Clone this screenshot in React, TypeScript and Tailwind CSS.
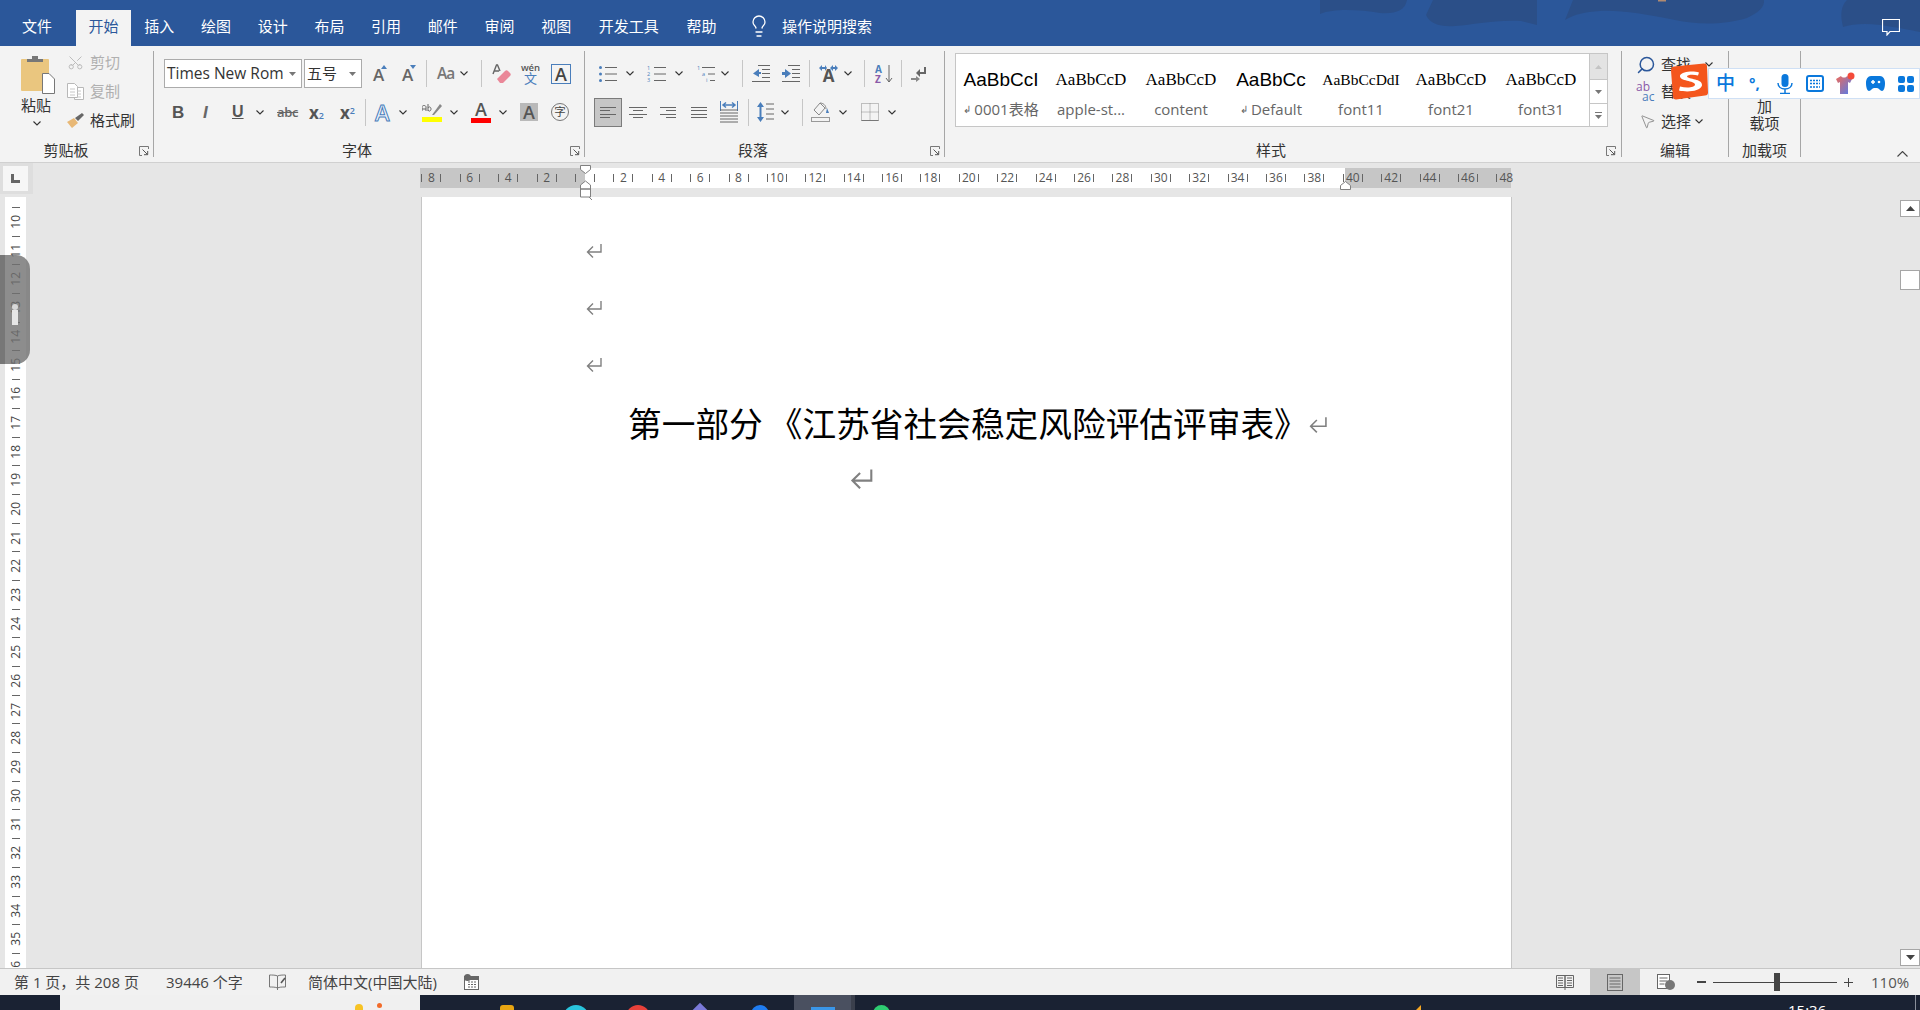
import { Lightbulb, Scissors, Search, MousePointer2 } from 'lucide-react'

const tabs = [
  { label: '插入', w: 'w-[56.7px]' },
  { label: '绘图', w: 'w-[56.7px]' },
  { label: '设计', w: 'w-[56.7px]' },
  { label: '布局', w: 'w-[56.7px]' },
  { label: '引用', w: 'w-[56.7px]' },
  { label: '邮件', w: 'w-[56.7px]' },
  { label: '审阅', w: 'w-[56.7px]' },
  { label: '视图', w: 'w-[56.7px]' },
  { label: '开发工具', w: 'w-[88.7px]' },
  { label: '帮助', w: 'w-[56.7px]' },
]

const styles = [
  { sample: 'AaBbCcI', name: '0001表格', cls: "font-['Liberation_Sans',sans-serif] text-[19px]", mark: true },
  { sample: 'AaBbCcD', name: 'apple-st...', cls: "font-['Liberation_Serif',serif] text-[17px]", mark: false },
  { sample: 'AaBbCcD', name: 'content', cls: "font-['Liberation_Serif',serif] text-[17px]", mark: false },
  { sample: 'AaBbCc', name: 'Default', cls: "font-['Liberation_Sans',sans-serif] text-[19px]", mark: true },
  { sample: 'AaBbCcDdI', name: 'font11', cls: "font-['Liberation_Serif',serif] text-[15.5px]", mark: false },
  { sample: 'AaBbCcD', name: 'font21', cls: "font-['Liberation_Serif',serif] text-[17px]", mark: false },
  { sample: 'AaBbCcD', name: 'font31', cls: "font-['Liberation_Serif',serif] text-[17px]", mark: false },
]

const rulerMarks = [8, 6, 4, 2, 0, 2, 4, 6, 8, 10, 12, 14, 16, 18, 20, 22, 24, 26, 28, 30, 32, 34, 36, 38, 40, 42, 44, 46, 48]
const vMarks = Array.from({ length: 27 }, (_, i) => i + 10)

function Chevron({ className = '' }: { className?: string }) {
  return (
    <svg width="8" height="5" viewBox="0 0 8 5" className={'shrink-0 ' + className}>
      <path d="M0.5 0.5 4 4 7.5 0.5" fill="none" stroke="#333" strokeWidth="1.1" />
    </svg>
  )
}

function Launcher({ className = '' }: { className?: string }) {
  return (
    <svg width="10" height="10" viewBox="0 0 10 10" className={'shrink-0 ' + className}>
      <path d="M9.5 3V.5H.5v9H3" fill="none" stroke="#777" />
      <path d="M3.5 3.5 8.5 8.5M5 8.7h3.7V5" fill="none" stroke="#555" />
    </svg>
  )
}

function Sep({ className = '' }: { className?: string }) {
  return <div className={'w-px h-[27px] bg-[#c6c6c6] shrink-0 ' + className} />
}

function Return({ w = 16, h = 15, className = '', stroke = 1.4 }: { w?: number; h?: number; className?: string; stroke?: number }) {
  return (
    <svg width={w} height={h} viewBox="0 0 16 15" className={className}>
      <path d="M15 1v8H2M7 3.5 1.5 9 7 14.5" fill="none" stroke="#808080" strokeWidth={stroke} />
    </svg>
  )
}

function Lines({ w, ys, x1, x2, className = '', h = 18 }: { w: number; ys: number[]; x1: (i: number) => number; x2: (i: number) => number; className?: string; h?: number }) {
  return (
    <svg width={w} height={h} viewBox={`0 0 ${w} ${h}`} className={'shrink-0 ' + className}>
      {ys.map((y, i) => (
        <path key={i} d={`M${x1(i)} ${y}.5H${x2(i)}`} stroke="#666" strokeWidth="1" />
      ))}
    </svg>
  )
}

function TitleBar() {
  return (
    <div className="relative h-[46px] shrink-0 bg-[#2b579a] flex items-end text-[15px] text-white overflow-hidden">
      {/* theme clouds */}
      <svg width="620" height="46" viewBox="0 0 620 46" className="absolute right-0 top-0">
        <g fill="#2b4f88">
          <path d="M20 0v14C35 8 60 10 80 13c15 1 25-2 27-13z" />
          <path d="M133 0l-7 15c4 9 14 12 29 11 20-1 35-6 66-5l16 4V0z" />
          <path d="M273 0l-8 20c10-6 20-8 35-9 20-1 45 3 75 9 20 4 45 6 72-2 11-5 18-11 17-18z" />
          <path d="M547 0c-6 6-7 14-4 27 9-3 22-4 37-2 15 2 30 5 40 7V0z" />
        </g>
        <rect x="358" y="0" width="8" height="1.500" fill="#b08a70" />
      </svg>
      <div className="relative flex items-end h-[36px] pl-[4px]">
        <div className="w-[66px] h-full flex items-center justify-center pb-[4px]">文件</div>
        <div className="ml-[6px] w-[55px] h-full flex items-center justify-center pb-[4px] bg-[#f3f3f3] text-[#2b579a]">开始</div>
        {tabs.map((t) => (
          <div key={t.label} className={t.w + ' h-full flex items-center justify-center pb-[4px]'}>{t.label}</div>
        ))}
        <Lightbulb size={24} strokeWidth={1.3} className="ml-[17px] mb-[4px] self-center shrink-0" />
        <span className="ml-[11px] mb-[4px] self-center">操作说明搜索</span>
      </div>
      <svg width="18" height="17" viewBox="0 0 18 17" className="absolute left-[1882px] top-[19px]">
        <path d="M.5.500h17v12H8l-3 3.500v-3.500H.5z" fill="none" stroke="#fff" strokeWidth="1.200" />
      </svg>
    </div>
  )
}

function Group({ label, className, labelCls = '', children, launcher }: { label: string; className: string; labelCls?: string; children: React.ReactNode; launcher?: string }) {
  return (
    <div className={'relative shrink-0 flex flex-col h-[106px] mt-[5px] border-r border-[#a6a6a6] ' + className}>
      <div className="flex-1 min-h-0">{children}</div>
      <div className={'h-[16px] pt-[2px] flex items-center justify-center text-[15px] leading-none text-[#333] ' + labelCls}>{label}</div>
      {launcher && <Launcher className={'absolute bottom-[1px] ' + launcher} />}
    </div>
  )
}

function Clipboard() {
  return (
    <Group label="剪贴板" className="w-[154px]" labelCls="pr-[21px]" launcher="right-[4px]">
      <div className="flex">
        <div className="w-[67px] pl-[20px] pt-[4px] flex flex-col">
          <svg width="35" height="39" viewBox="0 0 35 39">
            <rect x="1" y="4" width="28" height="32" rx="1" fill="#eac67f" />
            <path d="M7 7V4h5V1h6v3h5v3z" fill="#777" />
            <path d="M22.500 18.500h6.500l5.500 5.500v14.500h-12z" fill="#fff" stroke="#777" />
          </svg>
          <div className="ml-[1px] mt-[3px] text-[15px] leading-[16px] text-[#333]">粘贴</div>
          <Chevron className="ml-[13px] mt-[8px]" />
        </div>
        <div className="pt-[3px] text-[15px] leading-[17px]">
          <div className="flex items-center h-[17px] text-[#b0b0b0]">
            <Scissors size={17} strokeWidth={1.3} className="w-[17px] -rotate-90 text-[#b8b8b8]" />
            <span className="ml-[6px]">剪切</span>
          </div>
          <div className="flex items-center h-[17px] mt-[12px] text-[#b0b0b0]">
            <svg width="17" height="17" viewBox="0 0 17 17">
              <path d="M.5.500h7l3 3v11h-10zM10.500 4.500h6v12h-9v-2" fill="#fff" stroke="#b8b8b8" />
              <path d="M3 6h5M3 9h5M3 12h5M10 8h4M10 11h4M10 14h4" stroke="#c8c8c8" />
            </svg>
            <span className="ml-[6px]">复制</span>
          </div>
          <div className="flex items-center h-[17px] mt-[12px] text-[#333]">
            <svg width="18" height="15" viewBox="0 0 18 15">
              <path d="M0 9 7 5l4 5-6 5c-2-2-3-4-5-6z" fill="#e8b876" />
              <path d="M8 5l3 3 6-6-2-2z" fill="#666" />
            </svg>
            <span className="ml-[5px]">格式刷</span>
          </div>
        </div>
      </div>
    </Group>
  )
}

function Font() {
  return (
    <Group label="字体" className="w-[431px]" labelCls="pr-[24px]" launcher="right-[4px]">
      <div className="flex items-center h-[29px] mt-[8px]">
        <div className="ml-[10px] w-[138px] h-[29px] bg-white border border-[#ababab] flex items-center pl-[2px] text-[15.5px] text-[#333] shrink-0">
          <span className="whitespace-nowrap">Times New Rom</span>
          <svg width="7" height="4" viewBox="0 0 7 4" className="ml-[5px] shrink-0"><path d="M0 0h7L3.500 4z" fill="#777" /></svg>
        </div>
        <div className="ml-[2px] w-[58px] h-[29px] bg-white border border-[#ababab] flex items-center justify-between pl-[2px] pr-[5px] text-[15px] text-[#333] shrink-0">
          <span>五号</span>
          <svg width="7" height="4" viewBox="0 0 7 4"><path d="M0 0h7L3.500 4z" fill="#777" /></svg>
        </div>
        <div className="ml-[11px] w-[14px] h-[18px] relative shrink-0 flex items-end justify-start text-[#666]">
          <span className="text-[17px] leading-[16px] font-semibold font-['Open_Sans',sans-serif]">A</span>
          <svg width="6" height="4" viewBox="0 0 6 4" className="absolute right-0 top-0"><path d="M0 4 3 0l3 4z" fill="#4a7ebb" /></svg>
        </div>
        <div className="ml-[15px] w-[14px] h-[18px] relative shrink-0 flex items-end justify-start text-[#666]">
          <span className="text-[17px] leading-[16px] font-semibold font-['Open_Sans',sans-serif]">A</span>
          <svg width="6" height="4" viewBox="0 0 6 4" className="absolute right-0 top-0"><path d="M0 0h6L3 4z" fill="#4a7ebb" /></svg>
        </div>
        <Sep className="ml-[10px]" />
        <span className="ml-[10px] w-[17px] text-[15.5px] leading-none font-semibold tracking-[-1px] text-[#777] font-['Open_Sans',sans-serif] shrink-0">Aa</span>
        <Chevron className="ml-[6px]" />
        <Sep className="ml-[13px]" />
        <svg width="19" height="20" viewBox="0 0 19 20" className="ml-[10px] shrink-0">
          <path d="M1 10 4.500 1h1L8 7M2 7h5" fill="none" stroke="#666" strokeWidth="1.400" />
          <path d="M5 15l8-8c1-1 2-1 3 0l2 2c1 1 1 2 0 3l-7 7H8z" fill="#ea8798" />
        </svg>
        <div className="ml-[12px] w-[15px] shrink-0 flex flex-col items-center leading-none">
          <span className="text-[9.5px] font-semibold text-[#555] leading-[9px] font-['Open_Sans',sans-serif]">wén</span>
          <span className="text-[13px] text-[#4a7ebb] leading-[13px]">文</span>
        </div>
        <div className="ml-[13px] w-[20px] h-[20px] border border-[#4a7ebb] flex items-center justify-center text-[18px] leading-none font-semibold text-[#444] font-['Open_Sans',sans-serif] shrink-0">A</div>
      </div>
      <div className="flex items-center h-[30px] mt-[9px]">
        <span className="ml-[18px] w-[10px] text-[17px] font-bold text-[#555] leading-none font-['Liberation_Sans',sans-serif]">B</span>
        <span className="ml-[21px] w-[10px] text-[17px] italic font-bold text-[#666] leading-none font-['Liberation_Sans',sans-serif]">I</span>
        <span className="ml-[19px] w-[11px] text-[16px] font-bold underline text-[#555] leading-none font-['Liberation_Sans',sans-serif]">U</span>
        <Chevron className="ml-[13px]" />
        <span className="ml-[13px] w-[20px] text-[13px] font-semibold line-through tracking-[-.3px] text-[#666] leading-none font-['Open_Sans',sans-serif]">abc</span>
        <span className="ml-[12px] w-[15px] text-[17px] font-bold text-[#555] leading-none font-['Open_Sans',sans-serif] whitespace-nowrap">x<span className="text-[9px] text-[#4a7ebb] font-semibold">2</span></span>
        <span className="ml-[16px] w-[14px] text-[17px] font-bold text-[#555] leading-none font-['Open_Sans',sans-serif] whitespace-nowrap">x<sup className="text-[9px] text-[#4a7ebb] font-semibold">2</sup></span>
        <Sep className="ml-[11px]" />
        <span className="ml-[9px] w-[17px] text-[22px] font-semibold text-[#eef4fb] [-webkit-text-stroke:1px_#4a7ebb] leading-none font-['Open_Sans',sans-serif]">A</span>
        <Chevron className="ml-[7px]" />
        <div className="ml-[15px] w-[20px] h-[20px] flex flex-col justify-between shrink-0">
          <svg width="20" height="14" viewBox="0 0 20 14">
            <path d="M0 9V5c0-2 4-2 4 0v4M0 7h4M6 2v7M6 6c1-2 3-1 3 1s-2 3-3 1" fill="none" stroke="#666" />
            <path d="M10 13l8-11 2 2-8 9z" fill="#888" />
          </svg>
          <div className="h-[5px] bg-[#ffff00]" />
        </div>
        <Chevron className="ml-[8px]" />
        <div className="ml-[13px] w-[20px] h-[21px] flex flex-col items-center justify-between shrink-0">
          <span className="text-[18px] leading-[15px] text-[#555] font-['Open_Sans',sans-serif] font-semibold">A</span>
          <div className="w-full h-[5px] bg-[#ff0000]" />
        </div>
        <Chevron className="ml-[8px]" />
        <div className="ml-[13px] w-[18px] h-[18px] bg-[#b9b9b9] flex items-center justify-center text-[18px] leading-none font-semibold text-[#555] font-['Open_Sans',sans-serif] shrink-0">A</div>
        <div className="ml-[13px] w-[18px] h-[18px] rounded-full border border-[#777] flex items-center justify-center text-[11.5px] leading-none text-[#444] shrink-0">字</div>
      </div>
    </Group>
  )
}

function Para() {
  const blue = '#4a7ebb'
  return (
    <Group label="段落" className="w-[360px]" labelCls="pr-[23px]" launcher="right-[4px]">
      <div className="flex items-center h-[29px] mt-[8px]">
        <svg width="18" height="18" viewBox="0 0 18 18" className="ml-[14px] shrink-0">
          <circle cx="1.500" cy="2.500" r="1.500" fill={blue} /><circle cx="1.500" cy="9" r="1.500" fill={blue} /><circle cx="1.500" cy="15.500" r="1.500" fill={blue} />
          <path d="M6 2.500h12M6 9h12M6 15.500h12" stroke="#666" />
        </svg>
        <Chevron className="ml-[9px]" />
        <svg width="19" height="18" viewBox="0 0 19 18" className="ml-[13px] shrink-0">
          <text x="0" y="5" fontSize="5.500" fill={blue}>1</text><text x="0" y="11" fontSize="5.500" fill={blue}>2</text><text x="0" y="17" fontSize="5.500" fill={blue}>3</text>
          <path d="M7 2.500h12M7 9h12M7 15.500h12" stroke="#666" />
        </svg>
        <Chevron className="ml-[9px]" />
        <svg width="18" height="18" viewBox="0 0 18 18" className="ml-[14px] shrink-0">
          <text x="0" y="5" fontSize="5.500" fill={blue}>1</text><text x="5" y="11" fontSize="5.500" fill={blue}>a</text><text x="9" y="17" fontSize="5.500" fill={blue}>i</text>
          <path d="M5 2.500h13M11 9h7M13 15.500h5" stroke="#666" />
        </svg>
        <Chevron className="ml-[6px]" />
        <Sep className="ml-[13px]" />
        <svg width="18" height="18" viewBox="0 0 18 18" className="ml-[9px] shrink-0">
          <path d="M6 .5h12M10 4.500h8M10 8.500h8M10 12.500h8M0 16.500h18" stroke="#666" />
          <path d="M7 4v3h2v2h-2v3L1 8.500z" fill={blue} />
        </svg>
        <svg width="18" height="18" viewBox="0 0 18 18" className="ml-[12px] shrink-0">
          <path d="M6 .5h12M10 4.500h8M10 8.500h8M10 12.500h8M0 16.500h18" stroke="#666" />
          <path d="M3 4v3H0v3h3v3l6-4.500z" fill={blue} />
        </svg>
        <Sep className="ml-[9px]" />
        <div className="ml-[9px] w-[19px] h-[18px] relative flex items-end justify-center shrink-0">
          <span className="text-[17px] leading-[14px] font-bold text-[#555] font-['Open_Sans',sans-serif]">A</span>
          <svg width="19" height="6" viewBox="0 0 19 6" className="absolute top-0 left-0"><path d="M0 3l3-3v2h3V0l2 3-2 3V4H3v2zM11 3l3-3v2h2V0l3 3-3 3V4h-2v2z" fill={blue} /></svg>
        </div>
        <Chevron className="ml-[6px]" />
        <Sep className="ml-[12px]" />
        <div className="ml-[10px] w-[18px] flex items-center shrink-0">
          <div className="flex flex-col text-[10px] leading-[10px] font-bold font-['Open_Sans',sans-serif] w-[10px]">
            <span className="text-[#4a7ebb]">A</span>
            <span className="text-[#8a5aa8]">Z</span>
          </div>
          <svg width="8" height="18" viewBox="0 0 8 18"><path d="M4 0v17M1 13l3 4 3-4" fill="none" stroke="#666" /></svg>
        </div>
        <Sep className="ml-[8px]" />
        <svg width="16" height="16" viewBox="0 0 16 16" className="ml-[9px] shrink-0">
          <path d="M14 1v6H7" fill="none" stroke="#666" strokeWidth="2" />
          <path d="M9 3 5 7l4 4z" fill="#666" />
          <path d="M0 12h5v-2l4 3-4 3v-2H0z" fill="#888" />
        </svg>
      </div>
      <div className="flex items-center h-[30px] mt-[9px]">
        <div className="ml-[9px] w-[28px] h-[29px] bg-[#c6c6c6] border border-[#7b7b7b] flex items-center justify-center shrink-0">
          <Lines w={16} h={13} ys={[1, 4, 8, 11]} x1={() => 0} x2={(i) => (i % 2 ? 10 : 16)} />
        </div>
        <Lines w={18} h={13} ys={[1, 4, 8, 11]} x1={(i) => (i % 2 ? 4 : 0)} x2={(i) => (i % 2 ? 14 : 18)} className="ml-[7px]" />
        <Lines w={16} h={13} ys={[1, 4, 8, 11]} x1={(i) => (i % 2 ? 6 : 0)} x2={() => 16} className="ml-[13px]" />
        <Lines w={16} h={13} ys={[1, 4, 8, 11]} x1={() => 0} x2={() => 16} className="ml-[15px]" />
        <svg width="18" height="22" viewBox="0 0 18 22" className="ml-[13px] shrink-0">
          <path d="M.5 0v10M17.500 0v10" stroke={blue} /><path d="M3 4h12M6 1.500 3 4l3 2.500M12 1.500 15 4l-3 2.500" fill="none" stroke={blue} strokeWidth="1.500" />
          <path d="M0 9h18M0 12h18M0 15h18M0 18h18M0 21h18" stroke="#666" />
        </svg>
        <Sep className="ml-[10px]" />
        <svg width="17" height="22" viewBox="0 0 17 22" className="ml-[8px] shrink-0">
          <path d="M3.500 5v12" stroke={blue} strokeWidth="2" /><path d="M0 6l3.500-5L7 6zM0 16l3.500 5L7 16z" fill={blue} />
          <path d="M9 3h8M9 8h8M9 13h8M9 18h8" stroke="#666" />
        </svg>
        <Chevron className="ml-[7px]" />
        <Sep className="ml-[13px]" />
        <svg width="19" height="20" viewBox="0 0 19 20" className="ml-[8px] shrink-0">
          <path d="M9 1 3 8l5 5 6-7zM9 1c3 0 6 2 6 6" fill="none" stroke="#888" />
          <path d="M16 6l2 5h-3z" fill={blue} />
          <rect x=".5" y="15.500" width="18" height="4" fill="none" stroke="#999" />
        </svg>
        <Chevron className="ml-[9px]" />
        <svg width="18" height="18" viewBox="0 0 18 18" className="ml-[14px] shrink-0">
          <path d="M.5.500h17v17H.5zM9 .5v17M.5 9h17" fill="none" stroke="#888" strokeDasharray="1 1" />
          <path d="M.5 17.500h17" stroke="#777" />
        </svg>
        <Chevron className="ml-[9px]" />
      </div>
    </Group>
  )
}

function Styles() {
  return (
    <Group label="样式" className="w-[677px]" labelCls="pr-[24px]" launcher="right-[5px]">
      <div className="ml-[10px] mt-[2px] w-[653px] h-[74px] bg-white border border-[#c6c6c6] flex">
        <div className="flex flex-1">
          {styles.map((s) => (
            <div key={s.name} className="w-[90px] flex flex-col items-center pt-[14px]">
              <div className={'h-[24px] leading-[24px] whitespace-nowrap text-black ' + s.cls}>{s.sample}</div>
              <div className="mt-[7px] text-[15px] leading-[20px] text-[#666] whitespace-nowrap flex items-center">
                {s.mark && <span className="text-[10px] mr-[3px]">↲</span>}
                {s.name}
              </div>
            </div>
          ))}
        </div>
        <div className="w-[18px] flex flex-col border-l border-[#c6c6c6]">
          <div className="h-[26px] bg-[#e3e3e3] flex items-center justify-center border-b border-[#c6c6c6]">
            <svg width="7" height="4" viewBox="0 0 7 4"><path d="M0 4h7L3.500 0z" fill="#c4c4c4" /></svg>
          </div>
          <div className="h-[24px] flex items-center justify-center border-b border-[#c6c6c6]">
            <svg width="7" height="4" viewBox="0 0 7 4"><path d="M0 0h7L3.500 4z" fill="#777" /></svg>
          </div>
          <div className="flex-1 flex flex-col items-center justify-center gap-[2px]">
            <div className="w-[7px] h-px bg-[#777]" />
            <svg width="7" height="4" viewBox="0 0 7 4"><path d="M0 0h7L3.500 4z" fill="#777" /></svg>
          </div>
        </div>
      </div>
    </Group>
  )
}

function Editing() {
  return (
    <Group label="编辑" className="w-[107px]">
      <div className="pl-[14px] pt-[5px] text-[15px] leading-[17px] text-[#333]">
        <div className="flex items-center h-[17px]">
          <Search size={20} strokeWidth={1.8} className="-scale-x-100 text-[#2b579a] shrink-0" />
          <span className="ml-[5px]">查找</span>
          <Chevron className="ml-[14px]" />
        </div>
        <div className="flex items-center h-[17px] mt-[10px]">
          <div className="w-[20px] text-[12px] leading-[10px] font-['Open_Sans',sans-serif]">
            <div className="text-[#8a5aa8]">ab</div>
            <div className="text-[#4a7ebb] pl-[6px]">ac</div>
          </div>
          <span className="ml-[5px]">替换</span>
        </div>
        <div className="flex items-center h-[17px] mt-[13px]">
          <MousePointer2 size={17} strokeWidth={1.1} className="ml-[3px] text-[#777] shrink-0" />
          <span className="ml-[5px]">选择</span>
          <Chevron className="ml-[4px]" />
        </div>
      </div>
    </Group>
  )
}

function Addins() {
  return (
    <Group label="加载项" className="w-[72px]">
      <div className="flex flex-col items-center pt-[47px] text-[15px] leading-[17px] text-[#333]">
        <div className="">加</div>
        <div>载项</div>
      </div>
    </Group>
  )
}

function Ribbon() {
  return (
    <div className="relative h-[117px] shrink-0 bg-[#f3f3f3] border-b border-[#d0d0d0] flex">
      <Clipboard />
      <Font />
      <Para />
      <Styles />
      <Editing />
      <Addins />
      <svg width="11" height="6" viewBox="0 0 11 6" className="absolute left-[1897px] top-[105px]">
        <path d="M.5 5.500 5.500.5l5 5" fill="none" stroke="#444" strokeWidth="1.100" />
      </svg>
      <div className="absolute left-[1708px] top-[22px] w-[212px] h-[31px] bg-white border border-[#cfe0f5] flex items-center text-[#0a78dc]">
        <span className="ml-[7px] w-[18px] text-[19px] leading-none font-medium">中</span>
        <span className="ml-[15px] w-[16px] text-[15px] leading-none font-bold whitespace-nowrap">°,</span>
        <svg width="16" height="20" viewBox="0 0 16 20" className="ml-[12px] shrink-0">
          <rect x="4.500" y="0" width="7" height="13" rx="3.500" fill="currentColor" />
          <path d="M1 9c0 8 14 8 14 0M8 15v4M3 19.500h10" fill="none" stroke="currentColor" strokeWidth="1.500" />
        </svg>
        <svg width="18" height="17" viewBox="0 0 18 17" className="ml-[13px] shrink-0">
          <rect x="1" y="1" width="16" height="15" rx="2" fill="none" stroke="currentColor" strokeWidth="2" />
          <path d="M4 5.500h10M4 8.500h10M4 12h10" stroke="currentColor" strokeWidth="1.600" strokeDasharray="2 1" />
        </svg>
        <svg width="20" height="24" viewBox="0 0 20 24" className="ml-[11px] shrink-0">
          <defs>
            <linearGradient id="shirt" x1="0" y1="0" x2="1" y2="1">
              <stop offset="0" stopColor="#ef6a5a" />
              <stop offset="1" stopColor="#4f7df0" />
            </linearGradient>
          </defs>
          <path d="M1 7l5-3c1 2 5 2 6 0l5 3-2 4-2-1v12H5V10l-2 1z" fill="url(#shirt)" />
          <circle cx="16" cy="4" r="3.500" fill="#f44b3a" />
        </svg>
        <svg width="19" height="17" viewBox="0 0 19 17" className="ml-[11px] shrink-0">
          <path d="M5 1h9c3 0 5 3 5 7s-1 8-3 8c-2 0-3-3-5-3H8c-2 0-3 3-5 3S0 12 0 8s2-7 5-7z" fill="currentColor" />
          <path d="M5 7h4M7 5v4" stroke="#fff" strokeWidth="1.500" />
          <circle cx="13" cy="7" r="1.300" fill="#fff" />
        </svg>
        <svg width="16" height="16" viewBox="0 0 16 16" className="ml-[13px] shrink-0">
          <rect x="0" y="0" width="7" height="7" rx="2" fill="currentColor" /><rect x="9" y="0" width="7" height="7" rx="2" fill="currentColor" />
          <rect x="0" y="9" width="7" height="7" rx="2" fill="currentColor" /><rect x="9" y="9" width="7" height="7" rx="2" fill="currentColor" />
        </svg>
      </div>
      <svg width="40" height="39" viewBox="0 0 40 38" className="absolute left-[1669px] top-[17px]">
        <path d="M5 3 35 0c2 0 3 1 3 3l1 26c0 2-1 3-3 3L7 36c-2 0-3-1-3-3L2 7c0-2 1-4 3-4z" fill="#f4561d" />
        <path d="M30 9C24 7 13 8 11 12c-1 6 15 5 15 9 0 3-8 4-15 2l-1 4c8 2 21 1 23-5 1-7-14-6-15-9 0-2 7-2 11-1z" fill="#fff" />
      </svg>
    </div>
  )
}

function HRuler() {
  return (
    <div className="relative ml-[387px] mt-[5px] w-[1091px] h-[20px] flex">
      <div className="w-[165px] bg-[#c6c6c6]" />
      <div className="w-[760px] bg-white" />
      <div className="w-[166px] bg-[#c6c6c6]" />
      <div className="absolute left-[-7.800px] top-0 h-full flex text-[12px] text-[#555] font-['Open_Sans',sans-serif]">
        {rulerMarks.map((m, i) => (
          <div key={i} className="w-[38.400px] h-full flex items-center justify-center">
            <div className="w-[20px] flex items-center justify-between">
              <div className="w-px h-[8px] bg-[#666]" />
              <span className="leading-none">{m > 0 ? m : ''}</span>
              <div className={i === rulerMarks.length - 1 ? 'w-px h-[8px]' : 'w-px h-[8px] bg-[#666]'} />
            </div>
          </div>
        ))}
      </div>
      <svg width="12" height="36" viewBox="0 0 12 36" className="absolute left-[160px] top-[-3px]">
        <path d="M.5.500h10v4L5.500 8.500.5 4.500z M.5 24v-4l5-4 5 4v4z M.5 24h10v8H.5z" fill="#fff" stroke="#808080" />
        <path d="M9 32l3 3" stroke="#808080" />
      </svg>
      <svg width="11" height="9" viewBox="0 0 11 9" className="absolute left-[920px] top-[13px]">
        <path d="M.5 8.500v-4l5-4 5 4v4z" fill="#fff" stroke="#808080" />
      </svg>
    </div>
  )
}

function VRuler() {
  return (
    <div className="ml-[5px] w-[21px] h-full bg-white overflow-hidden shrink-0 pt-[10px] text-[12px] text-[#444] font-['Open_Sans',sans-serif]">
      {vMarks.map((m) => (
        <div key={m} className="h-[28.700px] flex flex-col items-center">
          <div className="w-[8px] h-px bg-[#666] shrink-0" />
          <div className="flex-1 flex items-center justify-center -rotate-90 leading-none">{m}</div>
        </div>
      ))}
    </div>
  )
}

function Page() {
  return (
    <div className="ml-[395px] w-[1091px] h-full bg-white border-l border-r border-[#c6c6c6] shrink-0 overflow-hidden">
      <div className="pl-[164px] pt-[46px] flex flex-col gap-[42px]">
        <Return />
        <Return />
        <Return />
      </div>
      <div className="mt-[32px] pl-[206px] flex items-center h-[40px] text-[33.7px] leading-[40px] text-black whitespace-nowrap">
        <span>第一部分</span>
        <span className="ml-[6px]">《江苏省社会稳定风险评估评审表》</span>
        <Return w={20} h={17} className="mt-[1px]" />
      </div>
      <div className="mt-[24px] pl-[428px]">
        <Return w={23} h={21} stroke={1.5} />
      </div>
    </div>
  )
}

function Scrollbar() {
  return (
    <div className="ml-[388px] w-[20px] h-full flex flex-col shrink-0 pt-[3px]">
      <div className="h-[17px] bg-white border border-[#a6a6a6] flex items-center justify-center">
        <svg width="9" height="5" viewBox="0 0 9 5"><path d="M0 5h9L4.500 0z" fill="#444" /></svg>
      </div>
      <div className="mt-[53px] h-[20px] bg-white border border-[#a6a6a6]" />
      <div className="flex-1" />
      <div className="h-[17px] mb-[2px] bg-white border border-[#a6a6a6] flex items-center justify-center">
        <svg width="9" height="5" viewBox="0 0 9 5"><path d="M0 0h9L4.500 5z" fill="#444" /></svg>
      </div>
    </div>
  )
}

function Workspace() {
  return (
    <div className="relative flex-1 min-h-0 bg-[#e6e6e6] flex flex-col">
      <div className="h-[34px] shrink-0 flex">
        <div className="w-[33px] h-[31px] bg-[#dedede] shrink-0 flex pl-[3px] pt-[3px]">
          <div className="w-[25px] h-[25px] bg-[#f6f6f6] flex items-center justify-center">
            <svg width="9" height="9" viewBox="0 0 9 9"><path d="M0 0h3v6h6v3H0z" fill="#666" /></svg>
          </div>
        </div>
        <HRuler />
      </div>
      <div className="flex-1 min-h-0 flex">
        <VRuler />
        <Page />
        <Scrollbar />
      </div>
      <div className="absolute left-0 top-[92px] w-[30px] h-[109px] rounded-r-[14px] bg-[#707070]/80 overflow-hidden flex items-center">
        <div className="w-[5px] h-full bg-[#777]" />
        <div className="ml-[7px] w-[6px] flex flex-col items-center mt-[10px]">
          <div className="w-[6px] h-[6px] rounded-full bg-[#d8d8d8]" />
          <div className="w-[6px] h-[15px] bg-[#e6e6e6]" />
        </div>
      </div>
    </div>
  )
}

function StatusBar() {
  return (
    <div className="h-[27px] shrink-0 bg-[#f1f1f1] border-t border-[#c6c6c6] flex items-center text-[15px] text-[#444]">
      <span className="ml-[14px] w-[127px] whitespace-nowrap">第 1 页，共 208 页</span>
      <span className="ml-[25px] w-[79px] whitespace-nowrap">39446 个字</span>
      <svg width="18" height="16" viewBox="0 0 18 16" className="ml-[24px] shrink-0">
        <path d="M8.500 2C7 1 3 1 .5 1v12c3 0 6 0 8 1 2-1 4-1 8-1V1c-3 0-6 0-8 1zM8.500 2v14" fill="none" stroke="#777" />
        <path d="M12 9l4-5" stroke="#555" strokeWidth="1.600" />
      </svg>
      <span className="ml-[21px] w-[129px] whitespace-nowrap">简体中文(中国大陆)</span>
      <svg width="15" height="16" viewBox="0 0 15 16" className="ml-[27px] shrink-0">
        <rect x=".5" y="2.500" width="14" height="13" fill="#fff" stroke="#666" />
        <rect x="0" y="2" width="15" height="4" fill="#666" />
        <circle cx="3.500" cy="3.500" r="3.500" fill="#666" />
        <path d="M4 8h8M4 10.500h8M4 13h8" stroke="#666" strokeDasharray="2 1" />
      </svg>
      <svg width="18" height="16" viewBox="0 0 18 16" className="ml-[1077px] shrink-0">
        <path d="M.5 1.500h8.500v12H.5zM9 1.500h8.500v12H9z" fill="#f1f1f1" stroke="#666" />
        <path d="M2 4h5M2 6.500h5M2 9h5M2 11.500h5M11 4h5M11 6.500h5M11 9h5M11 11.500h5M9 14v2" stroke="#666" />
      </svg>
      <div className="ml-[16px] w-[50px] h-full bg-[#c6c6c6] flex items-center justify-center shrink-0">
        <svg width="16" height="17" viewBox="0 0 16 17">
          <rect x=".5" y=".5" width="15" height="16" fill="none" stroke="#666" />
          <path d="M2.500 4h11M2.500 7h11M2.500 10h11M2.500 13h11" stroke="#666" />
        </svg>
      </div>
      <svg width="18" height="16" viewBox="0 0 18 16" className="ml-[17px] shrink-0">
        <rect x=".5" y=".5" width="12" height="14" fill="#fff" stroke="#666" />
        <path d="M2.500 4h8M2.500 7h8M2.500 10h5" stroke="#666" />
        <circle cx="13" cy="11" r="5" fill="#777" />
      </svg>
      <div className="ml-[22px] w-[9px] h-[1.500px] bg-[#444] shrink-0" />
      <div className="ml-[7px] w-[124px] h-[14px] relative shrink-0 flex items-center">
        <div className="w-full h-px bg-[#444]" />
        <div className="absolute left-[61px] top-[-2px] w-[6px] h-[18px] bg-[#444]" />
      </div>
      <div className="ml-[7px] w-[9px] h-[9px] relative shrink-0">
        <div className="absolute top-[4px] w-[9px] h-px bg-[#444]" />
        <div className="absolute left-[4px] w-px h-[9px] bg-[#444]" />
      </div>
      <span className="ml-[18px] whitespace-nowrap text-[#555]">110%</span>
    </div>
  )
}

function Taskbar() {
  return (
    <div className="h-[15px] shrink-0 bg-[#1a2233] flex overflow-hidden relative">
      <div className="ml-[60px] w-[360px] h-full bg-[#f0f0f0] shrink-0 flex">
        <div className="ml-[295px] mt-[9px] w-[8px] h-[10px] rounded-t-full bg-[#f7c325]" />
        <div className="ml-[14px] mt-[8px] w-[5px] h-[5px] rounded-full bg-[#f26b2a]" />
      </div>
      <div className="ml-[80px] mt-[10px] w-[14px] h-[8px] rounded-t-[3px] bg-[#e8a512] shrink-0" />
      <div className="ml-[49px] mt-[10px] w-[26px] h-[26px] rounded-full bg-[#29c4dc] shrink-0" />
      <div className="ml-[37px] mt-[10px] w-[24px] h-[24px] rounded-full bg-[#e8413a] shrink-0" />
      <div className="ml-[42px] mt-[11px] w-[16px] h-[16px] rotate-45 bg-[#7a79d8] shrink-0" />
      <div className="ml-[43px] mt-[10px] w-[18px] h-[18px] rounded-full bg-[#1f7cf0] shrink-0" />
      <div className="ml-[25px] w-[57px] h-full bg-[#4a5060] shrink-0 flex justify-center">
        <div className="mt-[12px] w-[24px] h-[10px] bg-[#3a96e8]" />
      </div>
      <div className="w-[4px] h-full bg-[#3a3f4c] shrink-0" />
      <div className="ml-[18px] mt-[10px] w-[17px] h-[17px] rounded-full bg-[#2ecc71] shrink-0" />
      <div className="ml-[521px] mt-[10px] w-[10px] h-[10px] bg-[#f5a623] [clip-path:polygon(100%_0,100%_100%,0_100%)] shrink-0" />
      <span className="ml-[367px] mt-[6px] text-[15px] leading-[18px] text-white whitespace-nowrap">15:36</span>
      <div className="absolute left-[1915px] top-0 w-px h-full bg-[#8a8f9a]" />
    </div>
  )
}

export default function App() {
  return (
    <div className="w-[1920px] h-[1010px] flex flex-col overflow-hidden font-['Open_Sans','Noto_Sans_CJK_SC',sans-serif]">
      <TitleBar />
      <Ribbon />
      <Workspace />
      <StatusBar />
      <Taskbar />
    </div>
  )
}
